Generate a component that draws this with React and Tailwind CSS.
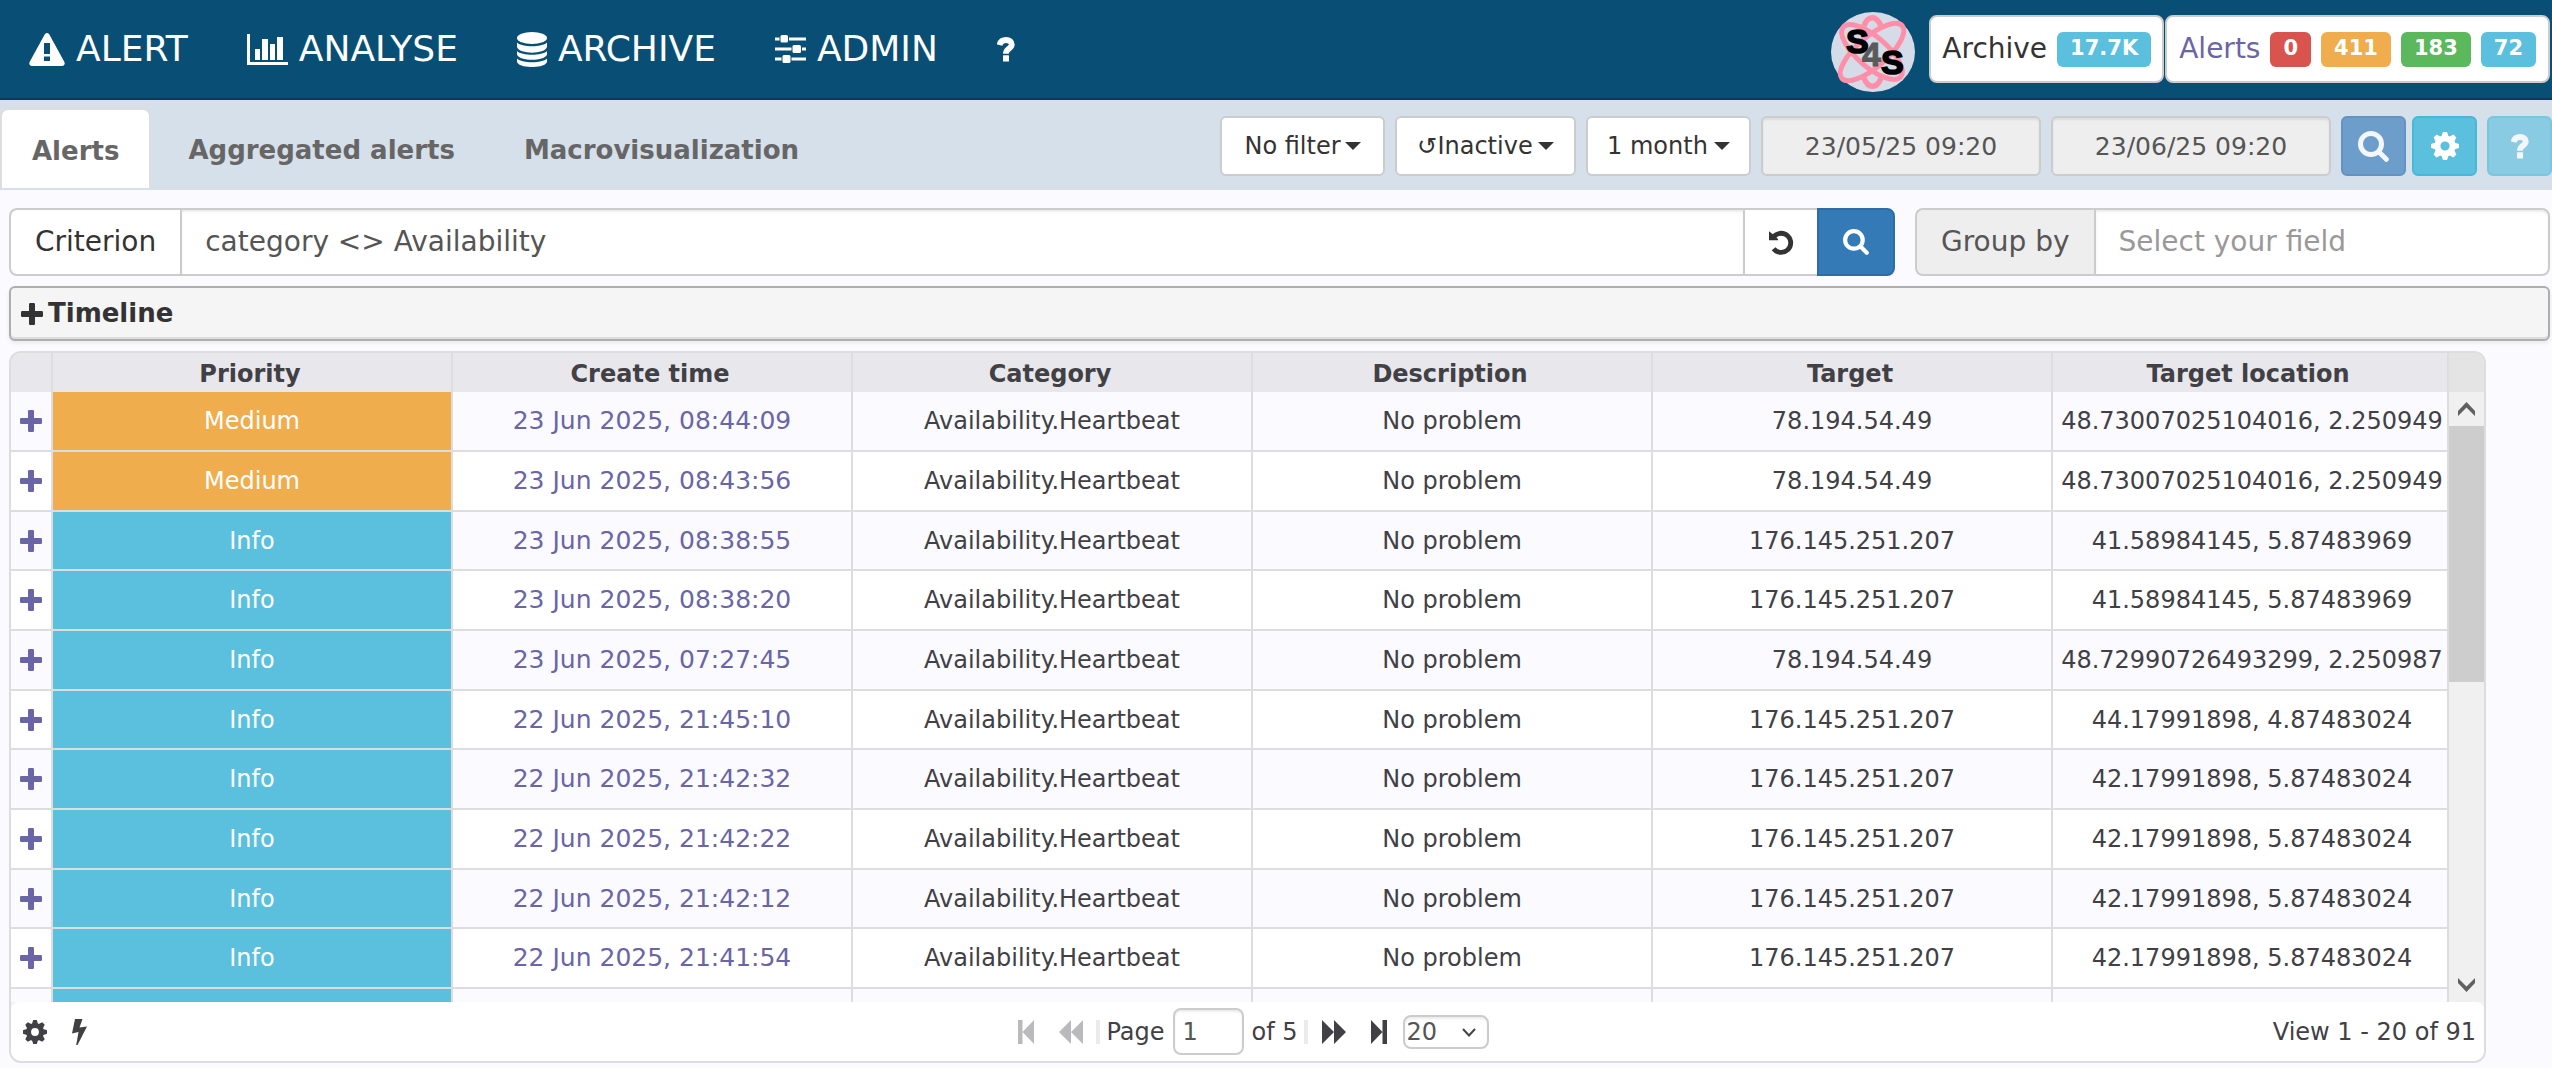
import React from "react";

const rows = [
  ["Medium", "23 Jun 2025, 08:44:09", "78.194.54.49", "48.73007025104016, 2.250949"],
  ["Medium", "23 Jun 2025, 08:43:56", "78.194.54.49", "48.73007025104016, 2.250949"],
  ["Info", "23 Jun 2025, 08:38:55", "176.145.251.207", "41.58984145, 5.87483969"],
  ["Info", "23 Jun 2025, 08:38:20", "176.145.251.207", "41.58984145, 5.87483969"],
  ["Info", "23 Jun 2025, 07:27:45", "78.194.54.49", "48.72990726493299, 2.250987"],
  ["Info", "22 Jun 2025, 21:45:10", "176.145.251.207", "44.17991898, 4.87483024"],
  ["Info", "22 Jun 2025, 21:42:32", "176.145.251.207", "42.17991898, 5.87483024"],
  ["Info", "22 Jun 2025, 21:42:22", "176.145.251.207", "42.17991898, 5.87483024"],
  ["Info", "22 Jun 2025, 21:42:12", "176.145.251.207", "42.17991898, 5.87483024"],
  ["Info", "22 Jun 2025, 21:41:54", "176.145.251.207", "42.17991898, 5.87483024"],
];

const columns = ["Priority", "Create time", "Category", "Description", "Target", "Target location"];

function WarningIcon() {
  return (
    <svg width="36" height="33" viewBox="0 0 36 33" fill="currentColor" aria-hidden="true">
      <path fillRule="evenodd" d="M15.8 1.3Q18 -1.3 20.2 1.3L35.4 29Q36.6 32.6 33.2 33H2.8Q-0.6 32.6 0.6 29ZM15 10V21H21V10ZM15 23.5V28H21V23.5Z" />
    </svg>
  );
}

function ChartIcon() {
  return (
    <svg width="41" height="31" viewBox="0 0 41 31" fill="currentColor" aria-hidden="true">
      <path d="M0 0H3V28H41V31H0ZM8 15H13V26H8ZM15 5H21V26H15ZM23 10H28V26H23ZM30 3H36V26H30Z" />
    </svg>
  );
}

function DatabaseIcon() {
  return (
    <svg width="30" height="35" viewBox="0 0 30 35" fill="currentColor" aria-hidden="true">
      <ellipse cx="15" cy="6" rx="15" ry="6" />
      <path d="M0 10.5C5 15.5 25 15.5 30 10.5V15C28 22.5 2 22.5 0 15ZM0 19C5 24 25 24 30 19V22.5C28 29.5 2 29.5 0 22.5ZM0 26.5C5 31.5 25 31.5 30 26.5V30C28 36.7 2 36.7 0 30Z" />
    </svg>
  );
}

function SlidersIcon() {
  return (
    <svg width="31" height="28" viewBox="0 0 31 28" fill="currentColor" aria-hidden="true">
      <path d="M0 2.5H4.5V5.5H0ZM14 2.5H31V5.5H14ZM0 12.5H16.5V15.5H0ZM27 12.5H31V15.5H27ZM0 22.5H6.5V25.5H0ZM16.5 22.5H31V25.5H16.5Z" />
      <rect x="5.5" width="7.5" height="7.5" rx="1.5" />
      <rect x="17.5" y="10" width="8.5" height="8" rx="1.5" />
      <rect x="7.5" y="20" width="8" height="8" rx="1.5" />
    </svg>
  );
}

function QuestionIcon() {
  return (
    <svg width="18" height="25" viewBox="0 0 18 25" aria-hidden="true">
      <path d="M2.6 8C3.4 4.6 5.6 3 9 3C12.6 3 14.8 5 14.8 7.6C14.8 11.6 8.9 11.2 8.9 16.8" fill="none" stroke="currentColor" strokeWidth="5.8" />
      <rect x="6" y="18.2" width="6" height="6.3" rx="0.6" fill="currentColor" />
    </svg>
  );
}

function SearchIcon({ size }) {
  return (
    <svg width={size} height={size} viewBox="0 0 31 31" fill="none" stroke="currentColor" aria-hidden="true">
      <circle cx="13" cy="13" r="10.5" strokeWidth="5" />
      <path d="M21.5 21.5L28.3 28.3" strokeWidth="5" strokeLinecap="round" />
    </svg>
  );
}

function GearIcon({ size }) {
  return (
    <svg width={size} height={size} viewBox="0 0 28 28" aria-hidden="true">
      <circle cx="14" cy="14" r="7.6" fill="none" stroke="currentColor" strokeWidth="6" />
      {[0, 45, 90, 135, 180, 225, 270, 315].map((a) => (
        <path key={a} d="M11.9 0H16.1Q16.9 2.5 17.6 5H10.4Q11.1 2.5 11.9 0Z" fill="currentColor" transform={`rotate(${a} 14 14)`} />
      ))}
    </svg>
  );
}

function UndoIcon() {
  return (
    <svg width="25" height="25" viewBox="0 0 25 25" aria-hidden="true">
      <path d="M4.6 18.8A9.6 9.6 0 1 0 5 6.4" fill="none" stroke="currentColor" strokeWidth="4.8" />
      <path d="M0 1.2L3.2 3.8L8.2 8L9.4 10.2H0Z" fill="currentColor" />
    </svg>
  );
}

function PlusIcon() {
  return (
    <svg width="22" height="22" viewBox="0 0 22 22" fill="currentColor" aria-hidden="true">
      <rect x="8" width="6" height="22" rx="1.2" />
      <rect y="8" width="22" height="6" rx="1.2" />
    </svg>
  );
}

function BoltIcon() {
  return (
    <svg width="15" height="26" viewBox="0 0 15 26" fill="currentColor" aria-hidden="true">
      <path d="M3 0H10.5L7.5 8.5L15 7.5L5.5 26H4.2L6.5 13L0 14.5Z" />
    </svg>
  );
}

function Caret() {
  return (
    <svg width="16" height="8" viewBox="0 0 16 8" fill="currentColor" aria-hidden="true">
      <path d="M0 0H16L8 8Z" />
    </svg>
  );
}

function Logo() {
  return (
    <svg width="84" height="80" viewBox="0 0 84 80" className="mb-[6px] self-end" role="img" aria-label="S4S">
      <ellipse cx="42" cy="40" rx="42" ry="40" fill="#d5dce8" />
      <g fill="none" stroke="#ff8fa8" strokeWidth="5">
        <ellipse cx="41" cy="40" rx="40" ry="15" transform="rotate(-41 41 40)" />
        <ellipse cx="41" cy="40" rx="38" ry="15" transform="rotate(41 41 40)" />
        <path d="M33 14C37 3 45 3 50 14M33 66C37 77 46 77 50 66" strokeWidth="5.5" />
      </g>
      <g fontFamily="Liberation Sans, Arial, sans-serif" fontWeight="700" fontSize="34">
        <text x="15" y="41" fill="#000" stroke="#000" strokeWidth="1.6">S</text>
        <text x="31" y="54" fill="#5a5a5a" stroke="#5a5a5a" strokeWidth="1">4</text>
        <text x="50" y="62" fill="#000" stroke="#000" strokeWidth="1.6">S</text>
      </g>
    </svg>
  );
}

function Badge({ className, children }) {
  return (
    <span className={`flex h-[35px] items-center rounded-[6px] px-[13px] text-[21px] font-bold text-white ${className}`}>
      {children}
    </span>
  );
}

const navLink = "flex items-center gap-[11px]";
const filterButton =
  "flex h-[60px] items-center justify-center rounded-[6px] border-2 border-[#ccc] bg-white text-[24px] text-[#333]";
const dateInput =
  "h-[60px] w-[280px] rounded-[6px] border-2 border-[#ccc] bg-[#eee] text-center text-[25px] text-[#555] shadow-[inset_0_2px_2px_rgba(0,0,0,0.075)]";
const squareButton = "flex h-[60px] w-[65px] items-center justify-center rounded-[6px] border-2";

export default function App() {
  return (
    <div className="min-h-screen bg-[#fafaff] font-['Verdana','DejaVu_Sans',sans-serif] text-[#404045]">
      <header className="flex h-[100px] items-center border-b-2 border-[#063d5c] bg-[#084e75] pl-[29px] pr-[2px] text-white">
        <nav className="flex items-center gap-[59px] text-[36px]">
          <a href="#alert" className={navLink}><WarningIcon />ALERT</a>
          <a href="#analyse" className={navLink}><ChartIcon />ANALYSE</a>
          <a href="#archive" className={navLink}><DatabaseIcon />ARCHIVE</a>
          <a href="#admin" className={navLink}><SlidersIcon />ADMIN</a>
          <a href="#help" aria-label="Help"><QuestionIcon /></a>
        </nav>
        <div className="ml-auto flex h-[98px] items-center gap-[1px]">
          <div className="mr-[13px] flex h-full"><Logo /></div>
          <a href="#archive-count" className="flex h-[68px] items-center gap-[10px] rounded-[8px] border-2 border-[#ccc] bg-white px-[11px] text-[28px] text-[#333]">
            Archive
            <Badge className="bg-[#5bc0de]">17.7K</Badge>
          </a>
          <a href="#alert-count" className="flex h-[68px] items-center gap-[10px] rounded-[8px] border-2 border-[#ccc] bg-white px-[12px] text-[28px] text-[#6965a6]">
            Alerts
            <Badge className="bg-[#d9534f]">0</Badge>
            <Badge className="bg-[#f0ad4e]">411</Badge>
            <Badge className="bg-[#5cb85c]">183</Badge>
            <Badge className="bg-[#5bc0de]">72</Badge>
          </a>
        </div>
      </header>

      <div className="flex h-[90px] items-start bg-[#d6e0ea]">
        <div role="tablist" className="flex pt-[8px] text-[26px] font-bold text-[#666]">
          <button role="tab" aria-selected="true" className="h-[80px] rounded-t-[8px] border-2 border-b-0 border-[#ddd] bg-white px-[30px] pt-[4px]">Alerts</button>
          <button role="tab" aria-selected="false" className="h-[80px] px-[37px] pt-[4px]">Aggregated alerts</button>
          <button role="tab" aria-selected="false" className="h-[80px] px-[32px] pt-[4px]">Macrovisualization</button>
        </div>
        <div className="ml-auto flex gap-[10px] pt-[16px]">
          <button className={`${filterButton} w-[165px] gap-[4px]`}>No filter<Caret /></button>
          <button className={`${filterButton} w-[181px] gap-[5px]`}>↺Inactive<Caret /></button>
          <button className={`${filterButton} w-[165px] gap-[6px]`}>1 month<Caret /></button>
          <input aria-label="Start date" readOnly value="23/05/25 09:20" className={dateInput} />
          <input aria-label="End date" readOnly value="23/06/25 09:20" className={dateInput} />
          <div className="flex gap-[6px]">
            <button aria-label="Search" className={`${squareButton} border-[#6493c0] bg-[#6d9dca] text-[#f3f6fa]`}><SearchIcon size={31} /></button>
            <button aria-label="Settings" className={`${squareButton} border-[#46b8da] bg-[#5bc0de] text-white`}><GearIcon size={28} /></button>
          </div>
          <button aria-label="Help" className={`${squareButton} border-[#79c6df] bg-[#88cbe2] text-[#f3f6fa]`}><QuestionIcon /></button>
        </div>
      </div>

      <main className="pb-[4px] pl-[9px] pr-[2px] pt-[18px]">
        <div className="flex gap-[20px]">
          <form className="flex h-[68px] flex-1 text-[28px]" onSubmit={(e) => e.preventDefault()}>
            <label htmlFor="criterion" className="flex items-center rounded-l-[8px] border-2 border-r-0 border-[#ccc] bg-white px-[24px] text-[#333]">Criterion</label>
            <input id="criterion" defaultValue="category <> Availability" className="min-w-0 flex-1 border-2 border-[#ccc] bg-white px-[23px] text-[#555] shadow-[inset_0_2px_2px_rgba(0,0,0,0.075)]" />
            <button type="button" aria-label="Reset" className="flex w-[72px] items-center justify-center border-y-2 border-[#ccc] bg-white text-[#333]"><UndoIcon /></button>
            <button type="submit" aria-label="Search" className="flex w-[78px] items-center justify-center rounded-r-[8px] border-2 border-[#2e6da4] bg-[#337ab7] text-white"><SearchIcon size={26} /></button>
          </form>
          <div className="flex h-[68px] w-[635px] text-[28px]">
            <label htmlFor="group" className="flex items-center rounded-l-[8px] border-2 border-r-0 border-[#ccc] bg-[#eee] px-[24px] text-[#555]">Group by</label>
            <input id="group" placeholder="Select your field" className="min-w-0 flex-1 rounded-r-[8px] border-2 border-[#ccc] bg-white px-[23px] shadow-[inset_0_2px_2px_rgba(0,0,0,0.075)] placeholder:text-[#999]" />
          </div>
        </div>

        <button aria-expanded="false" className="mt-[10px] flex h-[55px] w-full items-center gap-[5px] rounded-[6px] border-2 border-[#aeaeae] bg-[#f5f5f5] pl-[10px] text-[26px] font-bold text-[#333] shadow-[inset_0_-2px_0_#ddd,0_2px_4px_rgba(0,0,0,0.08)]">
          <PlusIcon />Timeline
        </button>

        <section className="mr-[64px] mt-[10px] overflow-hidden rounded-[12px] border-2 border-[#ddd] bg-[#f2f2f2]">
          <div className="flex h-[649px]">
            <div className="min-w-0 flex-1 overflow-hidden">
              <table className="w-full table-fixed border-separate border-spacing-0 text-center text-[24px]">
                <colgroup>
                  <col className="w-[40px]" />
                  <col /><col /><col /><col /><col />
                  <col className="w-[396px]" />
                </colgroup>
                <thead>
                  <tr className="h-[39px] bg-[#e8e8ec]">
                    <th aria-label="Details" className="p-0" />
                    {columns.map((c) => (
                      <th key={c} className="border-l-2 border-[#ddd] p-0 pt-[2px] pr-[4px] leading-[36px]">{c}</th>
                    ))}
                  </tr>
                </thead>
                <tbody>
                  {rows.map(([priority, time, target, location], i) => (
                    <tr key={i} className="h-[60px] bg-white odd:bg-[#fafaff] nth-[3n]:h-[59px]">
                      <td className="border-b-2 border-[#ddd] p-0 text-[#6965a6]">
                        <button aria-label="Expand row" className="mx-auto block"><PlusIcon /></button>
                      </td>
                      <td className={`border-b-2 border-l-2 border-[#ddd] p-0 text-white ${priority === "Medium" ? "bg-[#f0ad4e]" : "bg-[#5bc0de]"}`}>{priority}</td>
                      <td className="border-b-2 border-l-2 border-[#ddd] p-0 text-[25px] text-[#6965a6]"><a href="#event">{time}</a></td>
                      <td className="border-b-2 border-l-2 border-[#ddd] p-0">Availability.Heartbeat</td>
                      <td className="border-b-2 border-l-2 border-[#ddd] p-0">No problem</td>
                      <td className="border-b-2 border-l-2 border-[#ddd] p-0">{target}</td>
                      <td className="whitespace-nowrap border-b-2 border-l-2 border-[#ddd] p-0 pl-[4px]">{location}</td>
                    </tr>
                  ))}
                  <tr className="h-[13px] bg-[#fafaff]">
                    <td className="p-0" />
                    <td className="border-l-2 border-[#ddd] bg-[#5bc0de] p-0" />
                    <td className="border-l-2 border-[#ddd] p-0" />
                    <td className="border-l-2 border-[#ddd] p-0" />
                    <td className="border-l-2 border-[#ddd] p-0" />
                    <td className="border-l-2 border-[#ddd] p-0" />
                    <td className="border-l-2 border-[#ddd] p-0" />
                  </tr>
                </tbody>
              </table>
            </div>
            <div className="flex w-[37px] flex-col border-l-2 border-[#ddd] bg-[#f0f0f0] text-[#606060]">
              <div className="h-[39px] bg-[#e4e4e4]" />
              <div className="flex h-[34px] items-center justify-center">
                <svg width="17" height="14" viewBox="0 0 17 14" fill="currentColor" aria-hidden="true"><path d="M8.5 0L17 9V14L8.5 5.5L0 14V9Z" /></svg>
              </div>
              <div className="h-[256px] bg-[#cdcdcd]" />
              <div className="mt-auto flex h-[34px] items-center justify-center">
                <svg width="17" height="14" viewBox="0 0 17 14" fill="currentColor" aria-hidden="true"><path d="M8.5 14L17 5V0L8.5 8.5L0 0V5Z" /></svg>
              </div>
            </div>
          </div>

          <footer className="flex h-[59px] items-center rounded-[8px] bg-white pl-[12px] pr-[8px] text-[24px]">
            <div className="flex flex-1 items-center gap-[25px]">
              <button aria-label="Grid settings"><GearIcon size={24} /></button>
              <button aria-label="Actions"><BoltIcon /></button>
            </div>
            <div className="ml-[8px] flex items-center">
              <button aria-label="First page" className="mr-[25px] text-[#bababc]">
                <svg width="16" height="24" viewBox="0 0 16 24" fill="currentColor" aria-hidden="true"><path d="M0 0H4.5V24H0ZM16 0V24L4.5 12Z" /></svg>
              </button>
              <button aria-label="Previous page" className="mr-[13px] text-[#bababc]">
                <svg width="24" height="24" viewBox="0 0 24 24" fill="currentColor" aria-hidden="true"><path d="M12 0V24L0 12ZM24 0V24L12 12Z" /></svg>
              </button>
              <span className="mr-[6px] h-[24px] w-[4px] bg-[#ebebeb]" />
              <label htmlFor="page">Page</label>
              <input id="page" defaultValue="1" className="mx-[8px] h-[47px] w-[71px] rounded-[8px] border-2 border-[#ccc] bg-white px-[8px] text-[#555] shadow-[inset_0_2px_2px_rgba(0,0,0,0.075)]" />
              <span>of 5</span>
              <span className="ml-[6px] h-[24px] w-[4px] bg-[#ebebeb]" />
              <button aria-label="Next page" className="ml-[14px]">
                <svg width="24" height="24" viewBox="0 0 24 24" fill="currentColor" aria-hidden="true"><path d="M0 0L12 12L0 24ZM12 0L24 12L12 24Z" /></svg>
              </button>
              <button aria-label="Last page" className="ml-[25px]">
                <svg width="16" height="24" viewBox="0 0 16 24" fill="currentColor" aria-hidden="true"><path d="M11.5 0H16V24H11.5ZM0 0L11.5 12L0 24Z" /></svg>
              </button>
              <div className="relative ml-[16px]">
                <select aria-label="Rows per page" defaultValue="20" className="block h-[34px] w-[86px] appearance-none rounded-[8px] border-2 border-[#ccc] bg-white pl-[2px] text-[24px] leading-[30px] text-[#555] shadow-[inset_0_2px_2px_rgba(0,0,0,0.075)]">
                  <option>20</option>
                  <option>50</option>
                  <option>100</option>
                </select>
                <svg width="14" height="9" viewBox="0 0 14 9" fill="none" stroke="#444" strokeWidth="2" className="pointer-events-none absolute right-[13px] top-[13px]" aria-hidden="true"><path d="M1 1L7 7.5L13 1" /></svg>
              </div>
            </div>
            <div className="flex-1 text-right">View 1 - 20 of 91</div>
          </footer>
        </section>
      </main>
    </div>
  );
}
